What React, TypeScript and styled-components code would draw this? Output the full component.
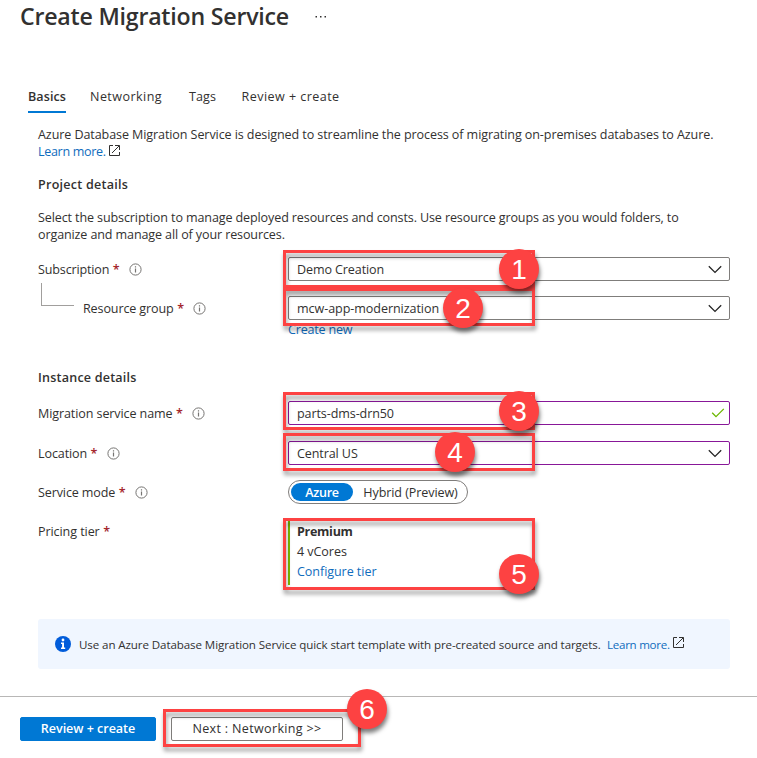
import React from "react";
import styled, { createGlobalStyle } from "styled-components";

const Global = createGlobalStyle`
  * { box-sizing: border-box; }
  body { margin: 0; background: #fff; overflow: hidden; }
`;

const Page = styled.div`
  width: 757px;
  height: 758px;
  display: flex;
  flex-direction: column;
  background: #fff;
  color: #323130;
  font: 12.55px/17px "Open Sans", "Noto Sans", sans-serif;
  white-space: nowrap;
`;

const Text = styled.span<{ $track?: number }>`
  letter-spacing: ${(p) => p.$track ?? 0}px;
`;

const Header = styled.header`
  height: 80px;
  padding-left: 20px;
  display: flex;
  align-items: flex-start;
`;

const Title = styled.h1`
  margin: 0;
  width: 294px;
  font-size: 23.16px;
  font-weight: 600;
  line-height: 32px;
  letter-spacing: -0.22px;
`;

const Tabs = styled.nav`
  height: 33px;
  padding-left: 28px;
  display: flex;
`;

const Tab = styled.a<{ $active?: boolean; $width: number; $gap: number; $track: number }>`
  width: ${(p) => p.$width}px;
  margin-right: ${(p) => p.$gap}px;
  padding-top: 8px;
  letter-spacing: ${(p) => p.$track}px;
  font-weight: ${(p) => (p.$active ? 600 : 400)};
  border-bottom: 2px solid ${(p) => (p.$active ? "#0078d4" : "transparent")};
`;

const Main = styled.main`
  width: 730px;
  height: 583px;
  padding: 13px 0 0 38px;
  display: flex;
  flex-direction: column;
`;

const Paragraph = styled.div<{ $after: number }>`
  display: flex;
  flex-direction: column;
  margin-bottom: ${(p) => p.$after}px;
`;

const Line = styled.div`
  display: flex;
`;

const Link = styled.a<{ $track?: number }>`
  color: #0f6cbd;
  letter-spacing: ${(p) => p.$track ?? 0}px;
`;

const SectionTitle = styled.h2<{ $after: number; $track: number }>`
  margin: 0 0 ${(p) => p.$after}px;
  font-size: inherit;
  font-weight: 600;
  letter-spacing: ${(p) => p.$track}px;
`;

const FormRow = styled.div<{ $after: number }>`
  height: 24px;
  margin-bottom: ${(p) => p.$after}px;
  display: grid;
  grid-template-columns: 250px 1fr;
`;

const Label = styled.div<{ $indent?: boolean }>`
  display: flex;
  align-items: center;
  height: 24px;
  position: relative;
  padding-left: ${(p) => (p.$indent ? 45 : 0)}px;
`;

const Star = styled.span`
  color: #a4262c;
  margin-left: 3.5px;
  width: 7px;
  font-weight: 600;
`;

const Elbow = styled.span`
  position: absolute;
  left: 3px;
  top: -13px;
  width: 33px;
  height: 23px;
  border-left: 1px solid #a19f9d;
  border-bottom: 1px solid #a19f9d;
`;

const Control = styled.div`
  position: relative;
`;

const Field = styled.div<{ $edited?: boolean }>`
  height: 24px;
  padding: 0 7.5px 0 8px;
  display: flex;
  align-items: center;
  justify-content: space-between;
  border: 1px solid ${(p) => (p.$edited ? "#881798" : "#7f7d7b")};
  border-radius: 2px;
`;

const FieldIcon = styled.svg<{ $shift?: number }>`
  display: block;
  flex: none;
  margin-right: ${(p) => p.$shift ?? 0}px;
`;

const Frame = styled.div<{ $top: number; $height: number; $left?: number; $width?: number }>`
  position: absolute;
  z-index: 1;
  left: ${(p) => p.$left ?? -5}px;
  top: ${(p) => p.$top}px;
  width: ${(p) => p.$width ?? 252}px;
  height: ${(p) => p.$height}px;
  border: 3px solid #fd4242;
  filter: drop-shadow(1px 4px 2px rgba(0, 0, 0, 0.4));
`;

const Badge = styled.div<{ $left: number; $top: number }>`
  position: absolute;
  z-index: 2;
  left: ${(p) => p.$left}px;
  top: ${(p) => p.$top}px;
  width: 40px;
  height: 40px;
  border-radius: 50%;
  background: #fd4242;
  color: #fff;
  font: 28px/41px "Liberation Sans", Arial, sans-serif;
  text-align: center;
  box-shadow: 1px 4px 4px rgba(0, 0, 0, 0.5);
`;

const BelowField = styled.div`
  height: 17px;
  margin: 1px 0 31px 250px;
`;

const Toggle = styled.div`
  width: 180px;
  height: 24px;
  padding: 2px;
  display: flex;
  border: 1px solid #7f7d7b;
  border-radius: 12px;
  line-height: 19px;
`;

const ToggleOption = styled.span<{ $on?: boolean; $width: number; $track: number }>`
  flex: none;
  width: ${(p) => p.$width}px;
  height: 18px;
  text-align: center;
  border-radius: 9px;
  letter-spacing: ${(p) => p.$track}px;
  color: ${(p) => (p.$on ? "#fff" : "inherit")};
  background: ${(p) => (p.$on ? "#0078d4" : "transparent")};
  font-weight: ${(p) => (p.$on ? 600 : 400)};
`;

const Tier = styled.div`
  height: 64px;
  margin-top: 2px;
  padding: 1px 0 0 7px;
  display: flex;
  flex-direction: column;
  border-left: 2px solid #7fba00;
  line-height: 20px;
`;

const Strong = styled.strong`
  font-weight: 700;
  letter-spacing: -0.3px;
`;

const InfoBar = styled.aside`
  height: 50px;
  margin-top: 76px;
  padding: 0 0 0 17px;
  display: flex;
  align-items: center;
  background: #f0f6ff;
  border-radius: 3px;
  font-size: 11.58px;
`;

const InfoText = styled.span`
  margin: 0 7px 0 8px;
  width: 521px;
  letter-spacing: -0.1px;
`;

const InfoLink = styled(Link)`
  width: 62.5px;
`;

const Footer = styled.footer`
  height: 62px;
  padding: 20px 0 0 20px;
  display: flex;
  gap: 15px;
  border-top: 1px solid #b8b7b6;
`;

const ButtonSlot = styled.div`
  position: relative;
`;

const Button = styled.button<{ $primary?: boolean; $width: number; $track: number }>`
  display: block;
  width: ${(p) => p.$width}px;
  height: 24px;
  padding: 0 0 2px;
  font: inherit;
  font-weight: ${(p) => (p.$primary ? 600 : 400)};
  letter-spacing: ${(p) => p.$track}px;
  color: ${(p) => (p.$primary ? "#fff" : "#323130")};
  background: ${(p) => (p.$primary ? "#0078d4" : "#fff")};
  border: 1px solid ${(p) => (p.$primary ? "#0078d4" : "#7f7d7b")};
  border-radius: 2px;
`;

const MoreIcon = styled.svg`
  margin-top: 13px;
`;

const InfoSvg = styled.svg`
  margin: 1px 0 0 9px;
`;

const ExternalSvg = styled.svg<{ $lift?: number }>`
  margin: 2px 0 0 3.5px;
  transform: translateY(${(p) => -(p.$lift ?? 0)}px);
`;

const InfoIcon = () => (
  <InfoSvg width="13" height="13" viewBox="0 0 13 13" fill="none">
    <circle cx="6.5" cy="6.5" r="5.6" stroke="#767472" />
    <path d="M6.5 5.6v4M6.5 3.2v1.3" stroke="#767472" strokeWidth="1.2" />
  </InfoSvg>
);

const External = ({ lift }: { lift?: number }) => (
  <ExternalSvg $lift={lift} width="11" height="11" viewBox="0 0 11 11" fill="none" stroke="#323130">
    <path d="M4 .5H.5v10h10V7M6 .5h4.5V5M10.3.7 3 8" />
  </ExternalSvg>
);

const Chevron = () => (
  <FieldIcon width="14" height="9" viewBox="0 0 14 9" fill="none" stroke="#222">
    <path d="M.8 1.2 7 7.4l6.2-6.2" strokeWidth="1.25" />
  </FieldIcon>
);

const Check = () => (
  <FieldIcon $shift={-3.5} width="14" height="10" viewBox="0 0 14 10" fill="none" stroke="#6bb700">
    <path d="M1.2 4.8 5 8.6 12.8.9" strokeWidth="1.3" />
  </FieldIcon>
);

interface FieldLabelProps {
  text: string;
  track: number;
  info?: boolean;
  nested?: boolean;
}

const FieldLabel = ({ text, track, info = true, nested }: FieldLabelProps) => (
  <Label $indent={nested}>
    {nested && <Elbow />}
    <Text $track={track}>{text}</Text>
    <Star>*</Star>
    {info && <InfoIcon />}
  </Label>
);

export default function App() {
  return (
    <Page>
      <Global />
      <Header>
        <Title>Create Migration Service</Title>
        <MoreIcon width="13" height="8" viewBox="0 0 13 8" fill="#323130">
          <rect x="1.5" y="3" width="1.5" height="1.5" />
          <rect x="6" y="3" width="1.5" height="1.5" />
          <rect x="10.5" y="3" width="1.5" height="1.5" />
        </MoreIcon>
      </Header>
      <Tabs>
        <Tab $active $width={38} $gap={24} $track={0.09}>Basics</Tab>
        <Tab $width={72} $gap={27} $track={0.44}>Networking</Tab>
        <Tab $width={27} $gap={25.5} $track={0.09}>Tags</Tab>
        <Tab $width={99} $gap={0} $track={0.45}>Review + create</Tab>
      </Tabs>
      <Main>
        <Paragraph $after={16}>
          <Text $track={-0.092}>
            Azure Database Migration Service is designed to streamline the process of migrating on-premises databases to Azure.
          </Text>
          <Line>
            <Link $track={-0.32}>Learn more.</Link>
            <External />
          </Line>
        </Paragraph>
        <SectionTitle $after={16} $track={0.25}>Project details</SectionTitle>
        <Paragraph $after={14}>
          <Text $track={-0.116}>
            Select the subscription to manage deployed resources and consts. Use resource groups as you would folders, to
          </Text>
          <Text $track={-0.12}>organize and manage all of your resources.</Text>
        </Paragraph>
        <FormRow $after={15}>
          <FieldLabel text="Subscription" track={-0.15} />
          <Control>
            <Field>
              <Text $track={-0.11}>Demo Creation</Text>
              <Chevron />
            </Field>
            <Frame $top={-7} $height={38} />
            <Badge $left={211} $top={-8}>1</Badge>
          </Control>
        </FormRow>
        <FormRow $after={0}>
          <FieldLabel text="Resource group" track={-0.12} nested />
          <Control>
            <Field>
              <Text $track={-0.06}>mcw-app-modernization</Text>
              <Chevron />
            </Field>
            <Frame $top={-8} $height={38} />
            <Badge $left={155} $top={-8}>2</Badge>
          </Control>
        </FormRow>
        <BelowField>
          <Link $track={-0.2}>Create new</Link>
        </BelowField>
        <SectionTitle $after={15} $track={0.21}>Instance details</SectionTitle>
        <FormRow $after={16}>
          <FieldLabel text="Migration service name" track={-0.1} />
          <Control>
            <Field $edited>
              <Text $track={-0.1}>parts-dms-drn50</Text>
              <Check />
            </Field>
            <Frame $top={-9} $height={38} />
            <Badge $left={211} $top={-10}>3</Badge>
          </Control>
        </FormRow>
        <FormRow $after={15}>
          <FieldLabel text="Location" track={-0.11} />
          <Control>
            <Field $edited>
              <Text $track={-0.1}>Central US</Text>
              <Chevron />
            </Field>
            <Frame $top={-8} $height={38} />
            <Badge $left={147} $top={-9}>4</Badge>
          </Control>
        </FormRow>
        <FormRow $after={15}>
          <FieldLabel text="Service mode" track={-0.12} />
          <Toggle>
            <ToggleOption $on $width={62} $track={-0.27}>Azure</ToggleOption>
            <ToggleOption $width={115} $track={-0.08}>Hybrid (Preview)</ToggleOption>
          </Toggle>
        </FormRow>
        <FormRow $after={0}>
          <FieldLabel text="Pricing tier" track={-0.08} info={false} />
          <Control>
            <Tier>
              <Strong>Premium</Strong>
              <Text $track={-0.06}>4 vCores</Text>
              <Link $track={-0.06}>Configure tier</Link>
            </Tier>
            <Frame $top={-1} $height={72} />
            <Badge $left={211} $top={35}>5</Badge>
          </Control>
        </FormRow>
        <InfoBar>
          <svg width="16" height="16" viewBox="0 0 16 16">
            <circle cx="8" cy="8" r="8" fill="#015cda" />
            <circle cx="8" cy="4" r="1.4" fill="#fff" />
            <path d="M6 6.5h3v5h1.2V13H6v-1.5h1.1V8H6z" fill="#fff" />
          </svg>
          <InfoText>
            Use an Azure Database Migration Service quick start template with pre-created source and targets.
          </InfoText>
          <InfoLink $track={-0.28}>Learn more.</InfoLink>
          <External lift={3} />
        </InfoBar>
      </Main>
      <Footer>
        <Button $primary $width={136} $track={-0.04}>Review + create</Button>
        <ButtonSlot>
          <Button $width={172} $track={0.33}>Next : Networking &gt;&gt;</Button>
          <Frame $left={-8} $width={198} $top={-8} $height={38} />
          <Badge $left={176} $top={-28}>6</Badge>
        </ButtonSlot>
      </Footer>
    </Page>
  );
}
